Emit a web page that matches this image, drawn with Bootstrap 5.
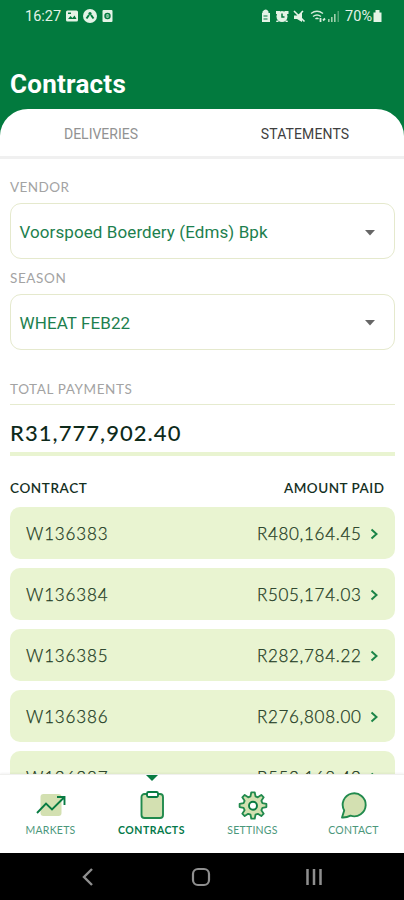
<!DOCTYPE html>
<html lang="en">
<head>
<meta charset="utf-8">
<meta name="viewport" content="width=device-width, initial-scale=1">
<title>Contracts</title>
<link href="https://cdn.jsdelivr.net/npm/bootstrap@5.3.0/dist/css/bootstrap.min.css" rel="stylesheet">
<style>
:root{--green:#027a3e;--pale:#e9f4d1;--ink:#15301f}
body{font-family:Lato,"Open Sans",sans-serif;background:var(--green);color:var(--ink)}
svg{display:block;flex:none}
.t{white-space:nowrap;line-height:1}
.rb{font-family:Roboto,sans-serif}
.screen{width:404px;height:900px}
.status{height:32px;padding:0 21px 0 25px;color:#e4f3e6}
.clock{font-size:14.5px;padding-top:2px}
.app-head{height:77px;padding:38.5px 10px 0;color:#fff}
.title{font-size:26px;font-weight:700;letter-spacing:.25px}
.panel{border-radius:28px 28px 0 0/27px 27px 0 0;min-height:0}
.tabs{height:50px;border-bottom:3px solid #f0f0f0;font-size:14px;padding-top:3px}
.tab-off{color:#929292}
.tab-on{color:#3f3f3f;letter-spacing:.12px}
.body-pad{padding:0 9.5px 0 10px;min-height:0}
.lbl{color:#a3a3a3;font-size:13.5px;letter-spacing:.6px}
.lbl-vendor{padding-top:22px;letter-spacing:.45px}
.lbl-season{padding-top:12.5px}
.lbl-total{padding-top:33px}
.pick{height:56px;border:1.5px solid #e5e9cd;border-radius:11px;padding:3px 19px 0 8.5px;margin-top:8.5px;color:#1d7f4e;font-size:17px;letter-spacing:.09px}
.total{height:52px;border-top:1.5px solid #e6ebcf;border-bottom:4px solid var(--pale);font-size:22px;font-weight:500;letter-spacing:1.05px;padding-top:8px;color:#0e2a1a}
.heads{font-size:13.5px;font-weight:600;letter-spacing:.6px;padding:25.5px 10px 11.5px 0}
.heads .amt{letter-spacing:.5px}
.line{height:52px;background:var(--pale);border-radius:10px;padding:2px 16px 0;margin-bottom:9.1px;flex:none;font-size:17px;font-weight:300;color:#1c3a22;letter-spacing:.85px;-webkit-text-stroke:.25px #1c3a22}
.sum{letter-spacing:.7px}
.dock{height:79px;border-top:1px solid #f0f0ee;font-size:10.5px;color:#4b977b;box-shadow:0 -1px 2px #0000000d}
.dock-item{width:101px;padding-top:15px}
.dock-item span{margin-top:2.5px;letter-spacing:.25px}
.pointer{top:0;left:50%;transform:translateX(-50%)}
.dock .dock-on{color:#04794a;font-weight:700}
.dock .dock-on span{letter-spacing:.48px}
.sys{height:47px;background:#000;gap:93px;padding-right:2px}
</style>
<script src="https://cdn.jsdelivr.net/npm/bootstrap@5.3.0/dist/js/bootstrap.bundle.min.js"></script>
</head>
<body>
<div class="screen d-flex flex-column overflow-hidden">
  <div class="status d-flex align-items-center justify-content-between rb flex-shrink-0">
    <div class="d-flex align-items-center">
      <span class="t clock">16:27</span>
      <svg class="ms-1" width="52" height="16" viewBox="0 0 52 16"><g fill="#e4f3e6"><rect x="1" y="2.500" width="12" height="11" rx="1.500"/><circle cx="25" cy="8" r="7"/><rect x="37.500" y="2" width="10" height="12" rx="1"/></g><path d="M3 11l2.500-3 2 2 2-2.500 2 3.500z" fill="#027a3e"/><rect x="3" y="4.500" width="3" height="1.500" fill="#027a3e"/><path d="M21.500 10.500L24 7M28.500 10.500L26 7" fill="none" stroke="#027a3e" stroke-width="2"/><circle cx="25" cy="5.500" r="1.600" fill="#027a3e"/><circle cx="42.500" cy="8" r="2.500" fill="none" stroke="#027a3e" stroke-width="1.400"/><path d="M40 8h4" stroke="#027a3e"/></svg>
    </div>
    <div class="d-flex align-items-center">
      <svg width="83" height="16" viewBox="0 0 83 16"><g fill="#e4f3e6"><path d="M-1 5h1.500V3.500q3.500-4 6 0V5H8v9H-1z" transform="translate(0)"/><circle cx="20" cy="8.500" r="5.500"/><path d="M14 3h4v3h-4zM22.500 3h4v3h-4zM15 12l-1 2h3zM25 12l1 2h-3z"/><path d="M32 7.500h3l5-4v10.500l-5-3h-3z"/></g><path d="M1.500 8h4M1.500 11h4" stroke="#027a3e" stroke-width="1.200"/><path d="M20 5.500V9h2.500" fill="none" stroke="#027a3e" stroke-width="1.500"/><path d="M32 3l10.500 10.500M39 5l2-2" stroke="#e4f3e6" stroke-width="1.600"/><g fill="none" stroke="#d7ecda" stroke-width="1.400"><path d="M49 5.500q6-4.500 12 0M51 8.500q4-3 8 0M53.500 11q1.500-1.500 3 0"/><path d="M58.500 10v4M61 12.500l2-2" stroke-width="1.800"/></g><g fill="#9fd0ac"><path d="M66 11h1.600v3H66zM69 9h1.600v5H69zM72 6h1.600v8H72z"/><path d="M75.500 3H77v11h-1.500z" opacity=".5"/></g></svg>
      <span class="t clock">70%</span>
      <svg width="11" height="14" viewBox="0 0 11 14"><path fill="#e4f3e6" d="M1.500 3.500h2V1h4v2.500h2V13h-8z"/></svg>
    </div>
  </div>
  <header class="app-head flex-shrink-0"><div class="t title rb">Contracts</div></header>
  <main class="panel bg-white flex-fill d-flex flex-column overflow-hidden">
    <div class="tabs d-flex align-items-center rb flex-shrink-0">
      <div class="w-50 text-center t"><span class="tab-off">DELIVERIES</span></div>
      <div class="w-50 text-center t pe-0 ps-1"><span class="tab-on">STATEMENTS</span></div>
    </div>
    <div class="body-pad flex-grow-1 d-flex flex-column overflow-hidden">
      <div class="lbl lbl-vendor t flex-shrink-0">VENDOR</div>
      <div class="pick rb d-flex align-items-center justify-content-between flex-shrink-0"><span class="t">Voorspoed Boerdery (Edms) Bpk</span><svg width="10" height="6" viewBox="0 0 10 6"><path d="M0 0h10L5 5.500z" fill="#666"/></svg></div>
      <div class="lbl lbl-season t flex-shrink-0">SEASON</div>
      <div class="pick rb d-flex align-items-center justify-content-between flex-shrink-0"><span class="t">WHEAT FEB22</span><svg width="10" height="6" viewBox="0 0 10 6"><path d="M0 0h10L5 5.500z" fill="#666"/></svg></div>
      <div class="lbl lbl-total t flex-shrink-0">TOTAL PAYMENTS</div>
      <div class="total t flex-shrink-0 d-flex align-items-center mt-2">R31,777,902.40</div>
      <div class="heads d-flex justify-content-between t flex-shrink-0"><span>CONTRACT</span><span class="amt">AMOUNT PAID</span></div>
      <div class="line d-flex align-items-center"><span class="t">W136383</span><span class="t sum ms-auto">R480,164.45</span><svg class="ms-2" width="9" height="12" viewBox="0 0 9 12"><path d="M1.500 1.500L6.500 6l-5 4.500" fill="none" stroke="#1c8548" stroke-width="2"/></svg></div>
      <div class="line d-flex align-items-center"><span class="t">W136384</span><span class="t sum ms-auto">R505,174.03</span><svg class="ms-2" width="9" height="12" viewBox="0 0 9 12"><path d="M1.500 1.500L6.500 6l-5 4.500" fill="none" stroke="#1c8548" stroke-width="2"/></svg></div>
      <div class="line d-flex align-items-center"><span class="t">W136385</span><span class="t sum ms-auto">R282,784.22</span><svg class="ms-2" width="9" height="12" viewBox="0 0 9 12"><path d="M1.500 1.500L6.500 6l-5 4.500" fill="none" stroke="#1c8548" stroke-width="2"/></svg></div>
      <div class="line d-flex align-items-center"><span class="t">W136386</span><span class="t sum ms-auto">R276,808.00</span><svg class="ms-2" width="9" height="12" viewBox="0 0 9 12"><path d="M1.500 1.500L6.500 6l-5 4.500" fill="none" stroke="#1c8548" stroke-width="2"/></svg></div>
      <div class="line d-flex align-items-center"><span class="t">W136387</span><span class="t sum ms-auto">R553,168.49</span><svg class="ms-2" width="9" height="12" viewBox="0 0 9 12"><path d="M1.500 1.500L6.500 6l-5 4.500" fill="none" stroke="#1c8548" stroke-width="2"/></svg></div>
    </div>
  </main>
  <nav class="dock bg-white d-flex flex-shrink-0 position-relative">
    <div class="dock-item d-flex flex-column align-items-center">
      <svg width="32" height="32" viewBox="0 0 32 32"><rect x="5.500" y="4" width="21" height="22" rx="3" fill="#d3e0b1"/><path d="M2 23l9-9.500 6 6L29 7.500M22 7h7.500v8" fill="none" stroke="#087b42" stroke-width="1.900"/></svg>
      <span class="t">MARKETS</span>
    </div>
    <div class="dock-item dock-on d-flex flex-column align-items-center position-relative">
      <svg class="pointer position-absolute" width="12" height="6" viewBox="0 0 12 6"><path d="M0 0h12L6 6z" fill="#087b42"/></svg>
      <svg width="32" height="32" viewBox="0 0 32 32"><rect x="5.500" y="4" width="21.500" height="24" rx="3" fill="#d3e0b1" stroke="#218a4d" stroke-width="1.900"/><rect x="11" y="2" width="11" height="5" rx="1.500" fill="#fff" stroke="#087b42" stroke-width="1.800"/></svg>
      <span class="t">CONTRACTS</span>
    </div>
    <div class="dock-item d-flex flex-column align-items-center">
      <svg width="32" height="32" viewBox="0 0 32 32"><path fill="#d3e0b1" stroke="#218a4d" stroke-width="1.800" stroke-linejoin="round" d="M14.300 2.300h3.400l.8 4 2.300 1 3.500-2.400 2.400 2.400-2.300 3.500 1 2.300 4 .8v3.200l-4 .8-1 2.300 2.300 3.500-2.400 2.400-3.500-2.300-2.300.9-.8 4h-3.400l-.8-4-2.300-.9-3.500 2.300-2.400-2.400 2.300-3.500-1-2.300-4-.8v-3.200l4-.8 1-2.300-2.300-3.500 2.400-2.400 3.500 2.400 2.300-1z"/><circle cx="16" cy="15.700" r="4" fill="#fff" stroke="#087b42" stroke-width="1.900"/></svg>
      <span class="t">SETTINGS</span>
    </div>
    <div class="dock-item d-flex flex-column align-items-center">
      <svg width="32" height="32" viewBox="0 0 32 32"><path d="M4 27.500L6.200 20.500A11.500 11.500 0 1 1 12.500 25.700Q8.500 27.800 4 27.500z" fill="#d3e0b1" stroke="#218a4d" stroke-width="1.900" stroke-linejoin="round"/></svg>
      <span class="t">CONTACT</span>
    </div>
  </nav>
  <div class="sys d-flex align-items-center justify-content-center flex-shrink-0">
    <svg width="20" height="22" viewBox="0 0 20 22"><path d="M14 3L6 11l8 8" fill="none" stroke="#8f8f8f" stroke-width="2.400"/></svg>
    <svg width="20" height="22" viewBox="0 0 20 22"><rect x="2" y="3" width="16" height="16" rx="5" fill="none" stroke="#8f8f8f" stroke-width="2.200"/></svg>
    <svg width="20" height="22" viewBox="0 0 20 22"><path d="M3.500 3v16M10 3v16M16.500 3v16" stroke="#8f8f8f" stroke-width="2.500"/></svg>
  </div>
</div>
</body>
</html>
